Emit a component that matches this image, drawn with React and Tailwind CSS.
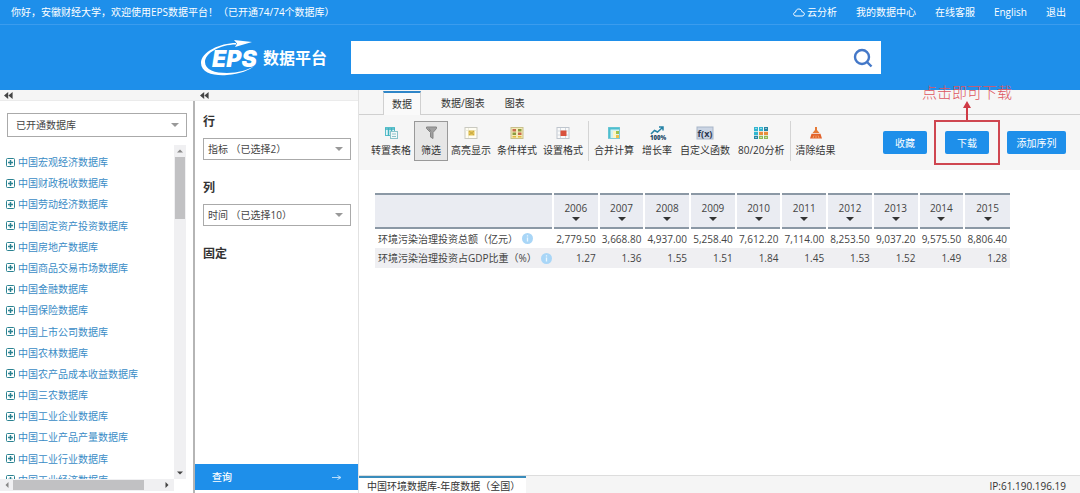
import { useState } from 'react'

const DATABASES = [
  '中国宏观经济数据库',
  '中国财政税收数据库',
  '中国劳动经济数据库',
  '中国固定资产投资数据库',
  '中国房地产数据库',
  '中国商品交易市场数据库',
  '中国金融数据库',
  '中国保险数据库',
  '中国上市公司数据库',
  '中国农林数据库',
  '中国农产品成本收益数据库',
  '中国三农数据库',
  '中国工业企业数据库',
  '中国工业产品产量数据库',
  '中国工业行业数据库',
  '中国工业经济数据库',
]

const YEARS = ['2006', '2007', '2008', '2009', '2010', '2011', '2012', '2013', '2014', '2015']

const ROWS = [
  {
    name: '环境污染治理投资总额（亿元）',
    values: ['2,779.50', '3,668.80', '4,937.00', '5,258.40', '7,612.20', '7,114.00', '8,253.50', '9,037.20', '9,575.50', '8,806.40'],
  },
  {
    name: '环境污染治理投资占GDP比重（%）',
    values: ['1.27', '1.36', '1.55', '1.51', '1.84', '1.45', '1.53', '1.52', '1.49', '1.28'],
  },
]

function Logo() {
  return (
    <a href="#home" className="flex items-center gap-[3px] text-white">
      <svg width="60" height="38" viewBox="0 0 60 38" fill="none">
        <path d="M36 4 C20 4 1 13 1 24 C1 34 14 37 27 36 C40 35 50 31 54 27 C48 31 38 34 27 34 C15 34 5 31 5 23 C5 14 20 5.500 36 5.500 Z" fill="#fff" />
        <path d="M34 1 L52 3 L35 8 L37 4.500 Z" fill="#fff" />
        <text x="12" y="28" fill="#fff" fontFamily="Inter, sans-serif" fontSize="23" fontWeight="900" fontStyle="italic">
          EPS
        </text>
      </svg>
      <span className="text-base font-bold leading-6">数据平台</span>
    </a>
  )
}

function CloudIcon() {
  return (
    <svg width="12" height="9" viewBox="0 0 12 9" fill="none" stroke="currentColor" strokeWidth="1">
      <path d="M3 8 C1.500 8 .7 7.200 .7 6 C.7 4.900 1.500 4.200 2.600 4.100 C2.800 2.200 4 1 5.800 1 C7.500 1 8.700 2.100 8.900 3.800 C10.400 3.900 11.300 4.700 11.300 6 C11.300 7.200 10.500 8 9 8 Z" />
    </svg>
  )
}

function CollapseIcon() {
  return (
    <svg width="9" height="7" viewBox="0 0 9 7" fill="#444">
      <path d="M4.200 0 V7 L0 3.500 Z M8.600 0 V7 L4.400 3.500 Z" />
    </svg>
  )
}

function PlusBox() {
  return (
    <svg width="9" height="9" viewBox="0 0 9 9" fill="none" stroke="#2b8291" className="shrink-0">
      <rect x=".5" y=".5" width="8" height="8" rx="1" />
      <path d="M2 4.500 H7 M4.500 2 V7" strokeWidth="1.500" />
    </svg>
  )
}

function Triangle({ className }) {
  return (
    <svg width="8" height="4" viewBox="0 0 8 4" fill="currentColor" className={className}>
      <path d="M0 0 H8 L4 4 Z" />
    </svg>
  )
}

function InfoIcon() {
  return (
    <svg width="11" height="11" viewBox="0 0 11 11" className="shrink-0">
      <circle cx="5.500" cy="5.500" r="5.500" fill="#a9d6f7" />
      <path d="M5.500 2.300 V3.500 M5.500 4.600 V8.500" stroke="#eaf6ff" strokeWidth="1.300" />
    </svg>
  )
}

const ICONS = {
  transpose: (
    <>
      <rect x="1.500" y="1.500" width="9" height="8" fill="#e4f6f8" stroke="#58bfca" />
      <path d="M1 3 H11 M4.500 2 V10 M7.500 2 V10" stroke="#41b2c0" strokeWidth="1.500" />
      <rect x="6.500" y="5.500" width="7" height="7" fill="#f3f8f8" stroke="#8cc3ca" />
      <path d="M8 8 H12 M8 10.500 H12" stroke="#8cc3ca" />
    </>
  ),
  filter: <path d="M2.500 1 H12.500 V2.500 L9 6.500 V12.500 L6.500 11 V6.500 L2.500 2.500 Z M5 2.500 L7 5.500" fill="#a0a0a0" stroke="#858585" />,
  highlight: (
    <>
      <rect x="1" y="1.500" width="12" height="11" fill="#fffdf2" stroke="#c9c9c0" />
      <path d="M1.500 4.500 H12.500 M4.500 2 V12" stroke="#ececdc" />
      <rect x="4.500" y="4.500" width="6" height="5" fill="#e8c553" />
      <path d="M5 5 L10 9 M5 9 L10 5" stroke="#c4a846" />
    </>
  ),
  style: (
    <>
      <rect x="1" y="1.500" width="12" height="11" fill="#f4ecb8" stroke="#c8c08c" />
      <path d="M2.500 3 H6 V5.500 H2.500 Z M8 6.500 H11.500 V9 H8 Z" fill="#c8694d" />
      <path d="M8 3 H11.500 V5.500 H8 Z M2.500 6.500 H6 V9 H2.500 Z" fill="#8a9a3e" />
      <path d="M2.500 10 H6 V11.500 H2.500 Z M8 10 H11.500 V11.500 H8 Z" fill="#e4b940" />
    </>
  ),
  format: (
    <>
      <rect x="1" y="1.500" width="12" height="11" fill="#fafafa" stroke="#bfc6ce" />
      <path d="M1 5 H13 M1 9 H13 M4.500 2 V12 M9.500 2 V12" stroke="#d3dae1" />
      <rect x="4.500" y="4.500" width="6" height="5.500" fill="#d8513d" />
    </>
  ),
  merge: (
    <>
      <rect x="1.500" y="1.500" width="11" height="11" fill="#d6f1f3" stroke="#7fcbd7" />
      <path d="M1.500 2.500 H12.500 M2.500 2 V12" stroke="#4cbfd0" strokeWidth="2" />
      <rect x="6" y="5" width="3" height="7" fill="#fff6c4" />
      <path d="M9 5 H12 V8 H9 Z" fill="#9cc14e" />
      <path d="M9 9 H12 V12 H9 Z" fill="#efc14a" />
    </>
  ),
  growth: (
    <>
      <path d="M1 8 L4.500 4.500 L7.500 6 L12.500 1.500 M9 1 H13 V4.500" stroke="#2683a6" strokeWidth="1.500" fill="none" />
      <text x="0" y="13.500" fontSize="6" fontWeight="800" fontFamily="Open Sans, sans-serif" fill="#1e4a68">100%</text>
    </>
  ),
  custom: (
    <>
      <rect x="-1" y="1" width="16" height="12" fill="#cbd5e4" stroke="#a8b5c8" />
      <text x="7" y="10.500" textAnchor="middle" fontSize="9" fontWeight="700" fontFamily="Open Sans, sans-serif" fill="#2b3850">f(x)</text>
    </>
  ),
  pareto: (
    <>
      <path d="M0 1 H4 V5 H0 Z M5 1 H9 V5 H5 Z M0 5.800 H4 V9 H0 Z" fill="#32b6d0" />
      <path d="M10 1 H14 V5 H10 Z M0 9.800 H4 V13 H0 Z" fill="#2786a4" />
      <path d="M5 5.800 H9 V9 H5 Z M10 5.800 H14 V9 H10 Z" fill="#e88e3c" />
      <path d="M5 9.800 H9 V13 H5 Z M10 9.800 H14 V13 H10 Z" fill="#8fb957" />
      <path d="M1.500 2.500 H2.500 M6.500 2.500 H7.500 M11.500 2.500 H12.500 M1.500 11.500 H2.500 M6.500 11.500 H7.500 M11.500 11.500 H12.500" stroke="#fff" />
    </>
  ),
  clear: (
    <>
      <path d="M6 1 H8 V4 L10.500 7 H3.500 L6 4 Z" fill="#e67a35" />
      <path d="M2.500 7.800 H11.500 L13 12.500 H1 Z" fill="#e2622b" />
      <path d="M4 12 L5 9.500 M7 12 V9.500 M10 12 L9 9.500" stroke="#f3a469" />
    </>
  ),
}

function Tool({ icon, label, active = false }) {
  return (
    <button
      type="button"
      className={
        active
          ? 'flex h-10 flex-col items-center gap-1 border border-[#999] bg-[#e6e6e6] px-1.5 pt-1'
          : 'flex h-10 flex-col items-center gap-1 px-[3px] pt-[5px]'
      }
    >
      <svg width="14" height="14" viewBox="0 0 14 14" overflow="visible">
        {ICONS[icon]}
      </svg>
      <span className="whitespace-nowrap leading-3">{label}</span>
    </button>
  )
}

function Divider() {
  return <span className="mx-0.5 h-10 w-px bg-[#d4d4d4]" />
}

function Picker({ id, label, value, className }) {
  return (
    <div className="relative">
      <select id={id} aria-label={label} className={`block w-full appearance-none border border-[#aaa] bg-white text-[#444] ${className}`}>
        <option>{value}</option>
      </select>
      <Triangle className="pointer-events-none absolute right-2 top-1/2 -translate-y-1/2 text-[#999]" />
    </div>
  )
}

function DatabasePanel() {
  return (
    <aside className="flex w-[195px] shrink-0 flex-col">
      <div className="flex h-[11px] shrink-0 items-center border-b border-[#ebebeb] bg-[#f5f5f5] pl-1">
        <button type="button" aria-label="收起">
          <CollapseIcon />
        </button>
      </div>
      <div className="flex min-h-0 flex-1 flex-col border-r-2 border-[#b5b5b5] pb-0.5 pt-3">
        <div className="pl-[7px] pr-1.5">
          <Picker id="scope" label="数据库范围" value="已开通数据库" className="h-6 pl-2" />
        </div>
        <div className="mt-2 flex min-h-0 flex-1">
          <div className="min-w-0 flex-1 overflow-hidden pl-1.5 pt-[7px]">
            <ul className="flex h-[338px] flex-col justify-between">
              {DATABASES.map((name) => (
                <li key={name} className="flex h-5 items-center gap-[3px]">
                  <PlusBox />
                  <a href="#database" className="whitespace-nowrap text-[#3a8cc6]">
                    {name}
                  </a>
                </li>
              ))}
            </ul>
          </div>
          <div className="mr-[7px] flex w-3 flex-col items-center bg-[#f0f0f2] pb-1 pt-1">
            <Triangle className="w-1.5 rotate-180 text-[#888]" />
            <div className="mt-1 h-[62px] w-2.5 bg-[#c1c1c3]" />
            <Triangle className="mt-auto w-1.5 text-[#444]" />
          </div>
        </div>
        <div className="mr-[19px] flex h-3 shrink-0 items-center bg-[#f0f0f2] px-1">
          <Triangle className="w-1.5 rotate-90 text-[#888]" />
          <div className="ml-[3px] h-2.5 w-[131px] bg-[#c1c1c3]" />
          <Triangle className="ml-auto w-1.5 -rotate-90 text-[#444]" />
        </div>
      </div>
    </aside>
  )
}

function QueryPanel() {
  return (
    <aside className="flex w-[164px] shrink-0 flex-col border-r border-[#e2e2e2]">
      <div className="flex h-[11px] shrink-0 items-center border-b border-[#ebebeb] bg-[#f5f5f5] pl-[5px]">
        <button type="button" aria-label="收起">
          <CollapseIcon />
        </button>
      </div>
      <div className="flex-1 pl-2 pr-[7px] pt-[13px]">
        <h2 className="mb-2 text-xs font-bold leading-4">行</h2>
        <Picker id="rows" label="行" value="指标 （已选择2）" className="h-[22px] pl-1" />
        <h2 className="mb-2 mt-5 text-xs font-bold leading-4">列</h2>
        <Picker id="columns" label="列" value="时间 （已选择10）" className="h-[22px] pl-1" />
        <h2 className="mt-5 text-xs font-bold leading-4">固定</h2>
      </div>
      <button type="button" className="mb-[3px] flex h-[26px] items-center justify-between bg-[#1e8fea] pl-[17px] pr-4 font-medium text-white">
        查询
        <svg width="10" height="5" viewBox="0 0 10 5" fill="none" stroke="#b7dcfb">
          <path d="M0 2.500 H9 M5.500 .5 L9 2.500 L5.500 4.500" />
        </svg>
      </button>
    </aside>
  )
}

function DataTable() {
  return (
    <table className="w-full table-fixed border-collapse text-[#444]">
      <thead>
        <tr className="h-[34px] border-y-2 border-[#8b98a5] bg-[#eaecf2]">
          <th className="w-[178px]" aria-label="指标" />
          {YEARS.map((year) => (
            <th key={year} className="border-l-2 border-l-white p-0 pt-0.5 font-normal">
              <span className="block leading-[14px]">{year}</span>
              <Triangle className="mx-auto my-0.5 text-[#333]" />
            </th>
          ))}
        </tr>
      </thead>
      <tbody>
        {ROWS.map((row) => (
          <tr key={row.name} className="h-5 even:bg-[#efeff2]">
            <th className="p-0 pl-[3px] text-left font-normal">
              <span className="flex items-center gap-1 whitespace-nowrap">
                {row.name}
                <InfoIcon />
              </span>
            </th>
            {row.values.map((value, i) => (
              <td key={YEARS[i]} className="p-0 pr-[3px] text-right">
                {value}
              </td>
            ))}
          </tr>
        ))}
      </tbody>
    </table>
  )
}

export default function App() {
  const [tab, setTab] = useState('数据')

  return (
    <div className="flex h-screen flex-col overflow-hidden bg-white font-['Open_Sans','Noto_Sans_CJK_SC',sans-serif] text-[10px] leading-4 text-[#333]">
      <header className="shrink-0 bg-[#1e8fea] text-white">
        <div className="flex h-[25px] items-center justify-between border-b border-[#3b9cee] pl-[11px] pr-3.5">
          <p>你好，安徽财经大学，欢迎使用EPS数据平台！（已开通74/74个数据库）</p>
          <nav className="flex items-center gap-[19px]">
            <a href="#cloud" className="flex items-center gap-0.5">
              <CloudIcon />
              云分析
            </a>
            <a href="#center">我的数据中心</a>
            <a href="#service">在线客服</a>
            <a href="#english">English</a>
            <a href="#logout">退出</a>
          </nav>
        </div>
        <div className="flex h-[65px] items-center gap-6 pl-[200px] pr-[199px]">
          <Logo />
          <form className="flex h-[33px] flex-1 items-center bg-white pr-2">
            <input type="search" aria-label="搜索" className="h-full min-w-0 flex-1 px-2 text-sm text-[#333] outline-none" />
            <button type="button" aria-label="搜索">
              <svg width="20" height="20" viewBox="0 0 20 20" fill="none" stroke="#4478c8" strokeWidth="2.400">
                <circle cx="9" cy="9" r="7" />
                <path d="M14 14 L18.500 18.500" />
              </svg>
            </button>
          </form>
        </div>
      </header>

      <div className="flex min-h-0 flex-1">
        <DatabasePanel />
        <QueryPanel />

        <main className="flex min-w-0 flex-1 flex-col">
          <div className="flex h-[25px] shrink-0 items-end border-b border-[#d0d0d0] bg-[#f6f6f6] pl-6">
            {['数据', '数据/图表', '图表'].map((name) => (
              <button
                key={name}
                type="button"
                onClick={() => setTab(name)}
                className={
                  tab === name
                    ? '-mb-px mr-2.5 h-6 border-x border-t-2 border-x-[#d0d0d0] border-t-[#2f86c8] bg-[#fafafa] px-2'
                    : 'h-6 px-2.5 pt-0.5'
                }
              >
                {name}
              </button>
            ))}
          </div>

          <div className="flex h-[55px] shrink-0 items-center justify-between bg-[#f6f6f6] pl-[9px] pr-3.5">
            <div className="flex items-center pb-1">
              <Tool icon="transpose" label="转置表格" />
              <Tool icon="filter" label="筛选" active />
              <Tool icon="highlight" label="高亮显示" />
              <Tool icon="style" label="条件样式" />
              <Tool icon="format" label="设置格式" />
              <Divider />
              <div className="flex gap-0.5">
                <Tool icon="merge" label="合并计算" />
                <Tool icon="growth" label="增长率" />
                <Tool icon="custom" label="自定义函数" />
                <Tool icon="pareto" label="80/20分析" />
              </div>
              <Divider />
              <Tool icon="clear" label="清除结果" />
            </div>
            <div className="flex gap-[18px] text-white">
              <button type="button" className="h-[23px] w-11 rounded-xs bg-[#1e8fea]">
                收藏
              </button>
              <div className="relative">
                <button type="button" className="h-[23px] w-11 rounded-xs bg-[#1e8fea]">
                  下载
                </button>
                <div className="pointer-events-none absolute -inset-[11px] border-2 border-[#cf4650]" />
                <div className="pointer-events-none absolute bottom-full left-1/2 mb-[11px] flex -translate-x-1/2 flex-col items-center text-[#dd5560]">
                  <span className="whitespace-nowrap font-['Noto_Sans_CJK_SC',serif] text-[15px] font-light leading-[18px]">点击即可下载</span>
                  <svg width="8" height="19" viewBox="0 0 8 19" fill="#cf3a45">
                    <path d="M4 0 L8 7 H5 V19 H3 V7 H0 Z" />
                  </svg>
                </div>
              </div>
              <button type="button" className="h-[23px] w-[59px] rounded-xs bg-[#1e8fea]">
                添加序列
              </button>
            </div>
          </div>

          <div className="flex-1 pl-4 pr-[70px] pt-[23px]">
            <DataTable />
          </div>

          <footer className="flex h-[18px] shrink-0 items-start justify-between border-t border-[#ddd] bg-[#f5f5f5] pr-3.5">
            <a href="#sheet" className="h-[18px] border-t-2 border-[#3a8cbb] bg-white pl-2 pr-1.5">
              中国环境数据库-年度数据（全国）
            </a>
            <span className="pt-0.5">IP:61.190.196.19</span>
          </footer>
        </main>
      </div>
    </div>
  )
}
